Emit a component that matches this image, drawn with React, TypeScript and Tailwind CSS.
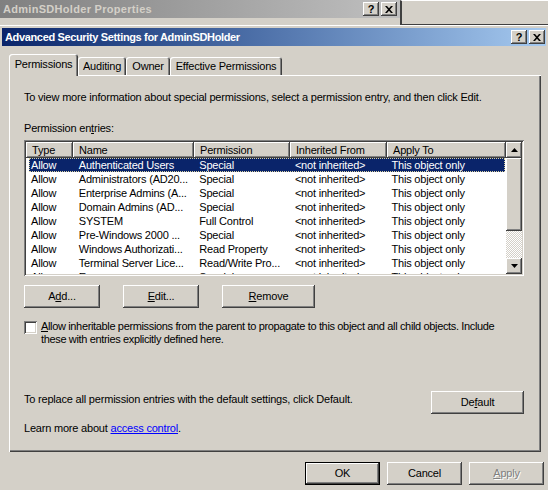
import React from 'react';

const raised =
  'bg-[#d4d0c8] shadow-[inset_-1px_-1px_#404040,inset_1px_1px_#ffffff,inset_-2px_-2px_#808080]';
const sunken =
  'shadow-[inset_1px_1px_#808080,inset_-1px_-1px_#ffffff,inset_2px_2px_#404040,inset_-2px_-2px_#d4d0c8]';

const rows = [
  ['Allow', 'Authenticated Users', 'Special'],
  ['Allow', 'Administrators (AD20...', 'Special'],
  ['Allow', 'Enterprise Admins (A...', 'Special'],
  ['Allow', 'Domain Admins (AD...', 'Special'],
  ['Allow', 'SYSTEM', 'Full Control'],
  ['Allow', 'Pre-Windows 2000 ...', 'Special'],
  ['Allow', 'Windows Authorizati...', 'Read Property'],
  ['Allow', 'Terminal Server Lice...', 'Read/Write Pro...'],
  ['Allow', 'Everyone', 'Special'],
];

const headers = ['Type', 'Name', 'Permission', 'Inherited From', 'Apply To'];
const colWidths = [47, 121, 96, 97, 119];

const CloseGlyph = () => (
  <svg width="8" height="7" viewBox="0 0 8 7">
    <path fill="#000" d="M0 0h2l2 2.2L6 0h2L5 3.5 8 7H6L4 4.8 2 7H0l3-3.5z" />
  </svg>
);

const CapButton = ({ children }: any) => (
  <div className={`w-[16px] h-[14px] flex items-center justify-center ${raised}`}>
    {children}
  </div>
);

const CapButtons = () => (
  <div className="flex gap-[2px]">
    <CapButton>
      <span className="font-bold text-[11px] leading-none text-black tracking-normal">?</span>
    </CapButton>
    <CapButton>
      <CloseGlyph />
    </CapButton>
  </div>
);

const Arrow = ({ up }: any) => (
  <svg width="7" height="4" viewBox="0 0 7 4">
    <path fill="#000" d={up ? 'M0 4h7L3.5 0z' : 'M0 0h7L3.5 4z'} />
  </svg>
);

const Button = ({ children, width, isDefault, disabled }: any) => (
  <div
    className={`h-[23px] flex items-center justify-center ${
      isDefault
        ? 'bg-[#d4d0c8] border border-black shadow-[inset_-1px_-1px_#404040,inset_1px_1px_#ffffff,inset_-2px_-2px_#808080]'
        : raised
    } ${disabled ? 'text-[#808080] [text-shadow:1px_1px_#ffffff]' : ''}`}
    style={{ width }}
  >
    {children}
  </div>
);

const Tab = ({ label, width, active }: any) => (
  <div
    className={`flex items-center justify-center rounded-t-[3px] bg-[#d4d0c8] shadow-[inset_1px_1px_#ffffff,inset_-1px_0_#404040,inset_-2px_0_#808080] ${
      active ? 'h-[22px] -mb-[1px] relative z-10 pb-[2px]' : 'h-[18px] pt-[1px]'
    }`}
    style={{ width }}
  >
    {label}
  </div>
);

const Scrollbar = () => (
  <div className="w-[16px] flex flex-col">
    <div className={`h-[16px] flex items-center justify-center ${raised}`}>
      <Arrow up />
    </div>
    <div className={`h-[73px] ${raised}`} />
    <div className="flex-1 bg-[repeating-conic-gradient(#ffffff_0_25%,#d4d0c8_0_50%)] bg-[length:2px_2px]" />
    <div className={`h-[16px] flex items-center justify-center ${raised}`}>
      <Arrow />
    </div>
  </div>
);

const PermissionList = () => (
  <div className={`w-[500px] h-[136px] bg-white p-[2px] flex ${sunken}`}>
    <div className="w-[480px] overflow-hidden">
      <div className="flex h-[16px]">
        {headers.map((h, i) => (
          <div
            key={h}
            className={`h-full flex items-center pl-[6px] ${raised}`}
            style={{ width: colWidths[i] }}
          >
            {h}
          </div>
        ))}
      </div>
      {rows.map((r, idx) => {
        const selected = idx === 0;
        const cells = [...r, '<not inherited>', 'This object only'];
        return (
          <div key={idx} className="h-[14px] flex">
            <div
              className={`ml-[3px] w-[476px] h-full flex items-center border ${
                selected
                  ? 'bg-[#0a246a] text-white border-dotted border-[#d8d0a0]'
                  : 'border-transparent'
              }`}
            >
              {cells.map((c, i) => (
                <div
                  key={i}
                  className={`whitespace-nowrap overflow-hidden ${i === 0 ? 'pl-[1px]' : 'pl-[6px]'}`}
                  style={{ width: i === 0 ? colWidths[0] - 4 : colWidths[i] }}
                >
                  {c}
                </div>
              ))}
            </div>
          </div>
        );
      })}
    </div>
    <Scrollbar />
  </div>
);

export default function App() {
  return (
    <div className="w-[548px] h-[490px] bg-[#d4d0c8] overflow-hidden text-[11px] leading-[13px] text-black font-['Liberation_Sans',Arial,sans-serif] tracking-[-0.2px]">
      {/* window behind */}
      <div className="flex h-[25px]">
        <div className="w-[400px]">
          <div className="h-[18px] flex items-center justify-between pl-[3px] pr-[3px] bg-linear-to-r from-[#808080] to-[#c0c0c0]">
            <span className="font-bold text-[#d4d0c8] tracking-[0.3px]">AdminSDHolder Properties</span>
            <CapButtons />
          </div>
        </div>
        <div className="flex-1 border-l-2 border-l-[#404040] border-t border-t-white border-b border-b-[#404040]" />
      </div>

      {/* dialog */}
      <div className="border-t border-white pt-[2px] px-[2px]">
        <div className="h-[18px] flex items-center justify-between pl-[3px] pr-[1px] bg-linear-to-r from-[#0a246a] to-[#a6caf0]">
          <span className="font-bold text-white tracking-[-0.35px]">
            Advanced Security Settings for AdminSDHolder
          </span>
          <CapButtons />
        </div>

        <div className="pl-[7px] pr-[5px]">
          <div className="mt-[8px] h-[21px] flex items-end">
            <Tab label="Permissions" width={69} active />
            <Tab label="Auditing" width={48} />
            <Tab label="Owner" width={44} />
            <Tab label="Effective Permissions" width={112} />
          </div>

          <div className="h-[377px] pt-[16px] pl-[15px] pr-[17px] shadow-[inset_1px_1px_#ffffff,inset_-1px_-1px_#404040,inset_-2px_-2px_#808080]">
            <p>
              To view more information about special permissions, select a permission entry, and then
              click Edit.
            </p>
            <p className="mt-[18px]">
              Permission en<u>t</u>ries:
            </p>
            <div className="mt-[5px]">
              <PermissionList />
            </div>

            <div className="mt-[9px] flex gap-[23px]">
              <Button width={76}>
                A<u>d</u>d...
              </Button>
              <Button width={76}>
                <u>E</u>dit...
              </Button>
              <Button width={93}>
                <u>R</u>emove
              </Button>
            </div>

            <div className="mt-[12px] flex items-start gap-[4px]">
              <div className={`mt-[1px] w-[13px] h-[13px] shrink-0 bg-white ${sunken}`} />
              <p className="tracking-[-0.35px]">
                <u>A</u>llow inheritable permissions from the parent to propagate to this object and all
                child objects. Include
                <br />
                these with entries explicitly defined here.
              </p>
            </div>

            <div className="mt-[45px] flex items-start justify-between">
              <p className="pt-[2px]">
                To replace all permission entries with the default settings, click Default.
              </p>
              <Button width={93}>
                De<u>f</u>ault
              </Button>
            </div>

            <p className="mt-[8px]">
              Learn more about <span className="text-[#0000ff] underline">access control</span>.
            </p>
          </div>
        </div>

        <div className="mt-[10px] pr-[2px] flex justify-end gap-[7px]">
          <Button width={75} isDefault>
            OK
          </Button>
          <Button width={75}>Cancel</Button>
          <Button width={75} disabled>
            <u>A</u>pply
          </Button>
        </div>
      </div>
    </div>
  );
}
